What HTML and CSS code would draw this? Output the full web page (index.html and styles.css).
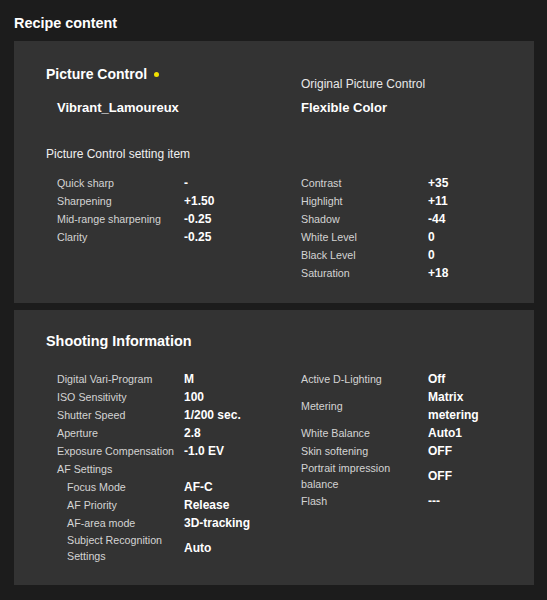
FILE: index.html
```html
<!DOCTYPE html>
<html lang="en">
<head>
<meta charset="utf-8">
<title>Recipe content</title>
<link rel="stylesheet" href="styles.css">
</head>
<body>
<main class="page">
  <h1 class="page-title">Recipe content</h1>

  <section class="panel panel-pc">
    <div class="pc-head">
      <div class="pc-left">
        <h2 class="section-title">Picture Control <span class="dot"></span></h2>
        <div class="pc-name">Vibrant_Lamoureux</div>
      </div>
      <div class="pc-right">
        <div class="pc-orig-label">Original Picture Control</div>
        <div class="pc-orig-value">Flexible Color</div>
      </div>
    </div>
    <h3 class="sub-title">Picture Control setting item</h3>
    <div class="cols cols-pc">
      <div class="list">
        <div class="row"><span class="lbl">Quick sharp</span><span class="val">-</span></div>
        <div class="row"><span class="lbl">Sharpening</span><span class="val">+1.50</span></div>
        <div class="row"><span class="lbl">Mid-range sharpening</span><span class="val">-0.25</span></div>
        <div class="row"><span class="lbl">Clarity</span><span class="val">-0.25</span></div>
      </div>
      <div class="list">
        <div class="row"><span class="lbl">Contrast</span><span class="val">+35</span></div>
        <div class="row"><span class="lbl">Highlight</span><span class="val">+11</span></div>
        <div class="row"><span class="lbl">Shadow</span><span class="val">-44</span></div>
        <div class="row"><span class="lbl">White Level</span><span class="val">0</span></div>
        <div class="row"><span class="lbl">Black Level</span><span class="val">0</span></div>
        <div class="row"><span class="lbl">Saturation</span><span class="val">+18</span></div>
      </div>
    </div>
  </section>

  <section class="panel panel-shoot">
    <h2 class="section-title big">Shooting Information</h2>
    <div class="cols cols-shoot">
      <div class="list">
        <div class="row"><span class="lbl">Digital Vari-Program</span><span class="val">M</span></div>
        <div class="row"><span class="lbl">ISO Sensitivity</span><span class="val">100</span></div>
        <div class="row"><span class="lbl">Shutter Speed</span><span class="val">1/200 sec.</span></div>
        <div class="row"><span class="lbl">Aperture</span><span class="val">2.8</span></div>
        <div class="row"><span class="lbl">Exposure Compensation</span><span class="val">-1.0 EV</span></div>
        <div class="row"><span class="lbl">AF Settings</span><span class="val"></span></div>
        <div class="row sub"><span class="lbl">Focus Mode</span><span class="val">AF-C</span></div>
        <div class="row sub"><span class="lbl">AF Priority</span><span class="val">Release</span></div>
        <div class="row sub"><span class="lbl">AF-area mode</span><span class="val">3D-tracking</span></div>
        <div class="row sub"><span class="lbl">Subject Recognition Settings</span><span class="val">Auto</span></div>
      </div>
      <div class="list">
        <div class="row"><span class="lbl">Active D-Lighting</span><span class="val">Off</span></div>
        <div class="row"><span class="lbl">Metering</span><span class="val">Matrix metering</span></div>
        <div class="row"><span class="lbl">White Balance</span><span class="val">Auto1</span></div>
        <div class="row"><span class="lbl">Skin softening</span><span class="val">OFF</span></div>
        <div class="row"><span class="lbl">Portrait impression balance</span><span class="val">OFF</span></div>
        <div class="row"><span class="lbl">Flash</span><span class="val">---</span></div>
      </div>
    </div>
  </section>
</main>
</body>
</html>
```

FILE: styles.css
```css
html, body {
  margin: 0;
  padding: 0;
}
body {
  background: #1c1c1c;
  color: #ffffff;
  font-family: "Liberation Sans", Arial, sans-serif;
  height: 600px;
  overflow: hidden;
}
.page {
  padding: 14px 13px 0 14px;
}
.page-title {
  margin: 0 0 9px 0;
  font-size: 14.4px;
  line-height: 18px;
  font-weight: 700;
  color: #ffffff;
}
.panel {
  background: #333333;
  padding: 0 32px;
}
.panel-pc {
  padding-top: 23px;
  padding-bottom: 21px;
}
.panel-shoot {
  margin-top: 7px;
  padding-top: 21px;
  padding-bottom: 21px;
}
.pc-head {
  display: grid;
  grid-template-columns: 255px 1fr;
  align-items: start;
}
.section-title {
  margin: 0;
  font-size: 14px;
  line-height: 20px;
  font-weight: 700;
  display: flex;
  align-items: center;
}
.section-title.big {
  font-size: 14.4px;
}
.dot {
  display: inline-block;
  width: 5px;
  height: 5px;
  border-radius: 50%;
  background: #f2e100;
  margin-left: 7px;
}
.pc-name {
  margin-top: 15px;
  padding-left: 11px;
  font-size: 13px;
  line-height: 18px;
  font-weight: 700;
}
.pc-right {
  padding-top: 12px;
}
.pc-orig-label {
  font-size: 12px;
  line-height: 16px;
  color: #e8e8e8;
}
.pc-orig-value {
  margin-top: 7px;
  font-size: 13px;
  line-height: 18px;
  font-weight: 700;
}
.sub-title {
  margin: 29px 0 0 0;
  font-size: 12px;
  line-height: 16px;
  font-weight: 400;
  color: #f0f0f0;
}
.cols {
  display: grid;
  grid-template-columns: 244px 1fr;
  padding-left: 11px;
  align-items: start;
}
.cols-pc {
  margin-top: 12px;
}
.cols-shoot {
  margin-top: 19px;
}
.row {
  display: grid;
  grid-template-columns: 127px 1fr;
  align-items: center;
  min-height: 18px;
}
.lbl {
  font-size: 10.7px;
  line-height: 16px;
  color: #d4d4d4;
  padding-right: 8px;
}
.val {
  font-size: 12px;
  line-height: 18px;
  font-weight: 700;
  color: #ffffff;
}
.row.sub .lbl {
  padding-left: 10px;
}
```
